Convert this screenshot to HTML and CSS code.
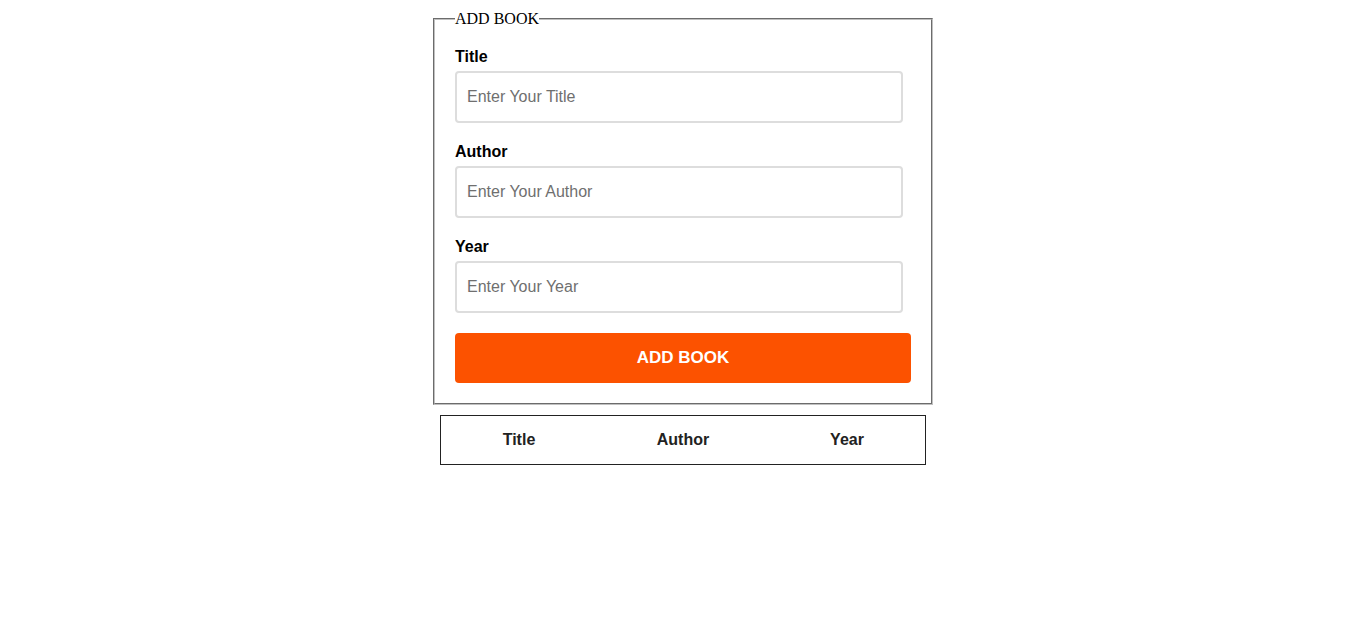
FILE: index.html
```html
<!DOCTYPE html>
<html>
<head>
<meta charset="utf-8">
<link rel="stylesheet" href="styles.css">
</head>
<body>
<fieldset class="book-form">
  <legend class="book-legend">ADD BOOK</legend>
  <form class="form">
    <label class="field-label" for="title">Title</label>
    <input class="field-input" id="title" type="text" placeholder="Enter Your Title">
    <label class="field-label" for="author">Author</label>
    <input class="field-input" id="author" type="text" placeholder="Enter Your Author">
    <label class="field-label" for="year">Year</label>
    <input class="field-input" id="year" type="text" placeholder="Enter Your Year">
    <button class="submit-btn" type="button">ADD BOOK</button>
  </form>
</fieldset>
<table class="book-table">
  <thead>
    <tr>
      <th class="col-title">Title</th>
      <th class="col-author">Author</th>
      <th class="col-year">Year</th>
    </tr>
  </thead>
</table>
</body>
</html>
```

FILE: styles.css
```css
body {
  margin: 10px 8px 8px;
  background: #fff;
}

.book-form {
  width: 456px;
  margin: 0 auto;
  padding: 20px;
  border: 2px groove #c0c0c0;
}

.book-legend {
  font-family: "Liberation Serif", serif;
  font-size: 16px;
  padding: 0;
  color: #000;
}

.form {
  display: flex;
  flex-direction: column;
  align-items: flex-start;
}

.field-label {
  font-family: "Liberation Sans", Arial, sans-serif;
  font-weight: bold;
  font-size: 16px;
  line-height: 18px;
  color: #000;
  margin-bottom: 5px;
}

.field-input {
  box-sizing: border-box;
  width: 448px;
  height: 52px;
  margin: 0 0 20px 0;
  padding: 0 10px;
  border: 2px solid #dddddd;
  border-radius: 4px;
  font-family: "Liberation Sans", Arial, sans-serif;
  font-size: 16px;
  color: #333;
  outline: none;
}

.field-input::placeholder {
  color: #6f6f6f;
}

.submit-btn {
  box-sizing: border-box;
  width: 456px;
  height: 50px;
  margin-top: 0;
  border: none;
  border-radius: 4px;
  background: #fc5200;
  color: #fff;
  font-family: "Liberation Sans", Arial, sans-serif;
  font-weight: bold;
  font-size: 17px;
}

.book-table {
  width: 486px;
  margin: 10px auto 0;
  border: 1px solid #222;
  border-collapse: collapse;
}

.book-table th {
  padding: 15px 0;
  line-height: 18px;
  font-family: "Liberation Sans", Arial, sans-serif;
  font-weight: bold;
  font-size: 16px;
  color: #222;
  text-align: center;
}

.col-title { width: 156px; }
.col-author { width: 172px; }
.col-year { width: 156px; }
```
